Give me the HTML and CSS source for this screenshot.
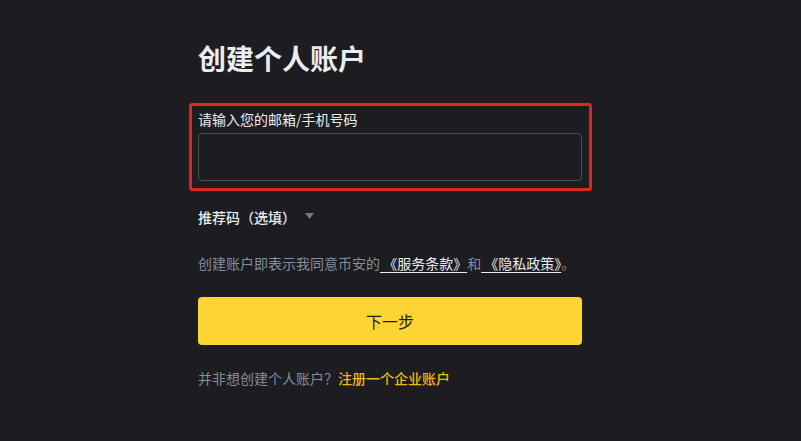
FILE: index.html
```html
<!DOCTYPE html>
<html lang="zh-CN">
<head>
<meta charset="utf-8">
<title>创建个人账户</title>
<link rel="stylesheet" href="styles.css">
</head>
<body>
<main class="page">
  <section class="form">
    <h1 class="title">创建个人账户</h1>
    <div class="highlight">
      <label class="label" for="account">请输入您的邮箱/手机号码</label>
      <input class="input" id="account" type="text">
    </div>
    <div class="referral">
      <span>推荐码（选填）</span>
      <svg class="caret" width="9" height="6" viewBox="0 0 9 6"><path d="M0 0 H9 L4.5 6 Z" fill="#707a8a"/></svg>
    </div>
    <p class="agree">创建账户即表示我同意币安的<a class="doc" href="#"> 《服务条款》</a>和<a class="doc" href="#"> 《隐私政策》</a>。</p>
    <button class="next" type="button">下一步</button>
    <p class="alt">并非想创建个人账户？<a class="biz" href="#">注册一个企业账户</a></p>
  </section>
</main>
</body>
</html>
```
FILE: styles.css
```css
html, body {
  margin: 0;
  padding: 0;
  background: #1c1c21;
}
body {
  font-family: "Noto Sans CJK SC", "Noto Sans", sans-serif;
  color: #eaecef;
  width: 801px;
  height: 441px;
  overflow: hidden;
}
.page {
  padding: 40px 0 0 189px;
}
.form {
  width: 403px;
  display: flex;
  flex-direction: column;
}
.title {
  margin: 0 0 0 9px;
  font-size: 28px;
  line-height: 36px;
  font-weight: 700;
  color: #eaecef;
}
.highlight {
  margin-top: 27px;
  border: 3px solid #dc2626;
  border-radius: 3px;
  padding: 3px 7px 7px 6px;
  display: flex;
  flex-direction: column;
  gap: 4px;
}
.label {
  font-size: 14px;
  line-height: 20px;
  color: #eaecef;
}
.input {
  box-sizing: border-box;
  width: 384px;
  height: 48px;
  margin: 0;
  background: #1c1c21;
  border: 1px solid #474d57;
  border-radius: 4px;
  outline: none;
  color: #eaecef;
}
.referral {
  margin: 16px 0 0 9px;
  display: flex;
  align-items: center;
  gap: 9px;
  font-size: 14px;
  line-height: 20px;
  font-weight: 500;
  color: #eaecef;
}
.caret {
  display: block;
  margin-top: -2px;
}
.agree {
  margin: 26px 0 0 9px;
  font-size: 14px;
  line-height: 20px;
  color: #848e9c;
  white-space: nowrap;
}
.doc {
  color: #eaecef;
  text-decoration: underline;
  text-underline-offset: 3px;
}
.next {
  margin: 24px 0 0 9px;
  width: 384px;
  height: 48px;
  border: none;
  border-radius: 4px;
  background: #fcd535;
  color: #1e2026;
  font-family: inherit;
  font-size: 16px;
  padding: 0;
}
.alt {
  margin: 23px 0 0 9px;
  font-size: 14px;
  line-height: 20px;
  color: #848e9c;
}
.biz {
  color: #f0b90b;
  text-decoration: none;
  font-weight: 500;
}
```
